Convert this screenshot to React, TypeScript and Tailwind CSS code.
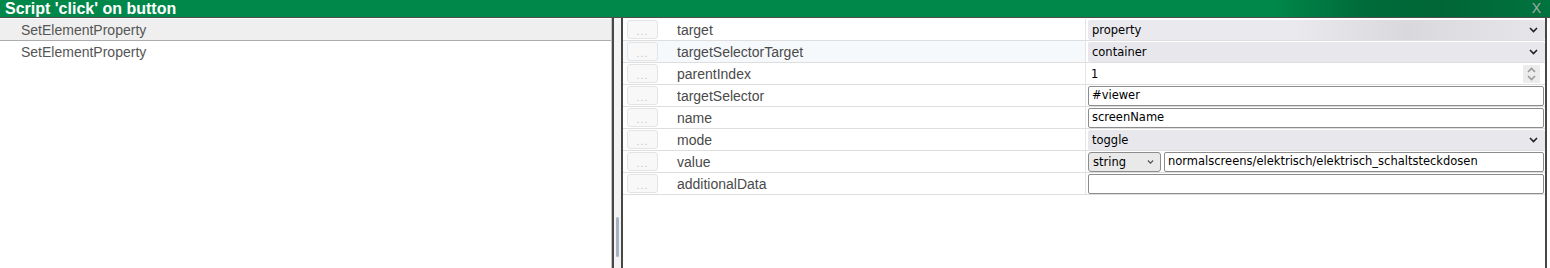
type Row = {
  label: string;
  kind: "select" | "number" | "text" | "typed";
  value: string;
  hover?: boolean;
  shade?: boolean;
};

const rows: Row[] = [
  { label: "target", kind: "select", value: "property", shade: true },
  { label: "targetSelectorTarget", kind: "select", value: "container", hover: true },
  { label: "parentIndex", kind: "number", value: "1" },
  { label: "targetSelector", kind: "text", value: "#viewer" },
  { label: "name", kind: "text", value: "screenName" },
  { label: "mode", kind: "select", value: "toggle" },
  { label: "value", kind: "typed", value: "normalscreens/elektrisch/elektrisch_schaltsteckdosen" },
  { label: "additionalData", kind: "text", value: "" },
];

const ctl = "font-['DejaVu_Sans',sans-serif] text-[11.5px] text-black";

function Chevron({ className }: { className?: string }) {
  return (
    <svg width="9" height="6" viewBox="0 0 9 6" className={className}>
      <path d="M1 1l3.5 3.5L8 1" fill="none" stroke="currentColor" strokeWidth="1.6" />
    </svg>
  );
}

function Control({ row }: { row: Row }) {
  if (row.kind === "select") {
    return (
      <div
        className={`${ctl} flex h-[20px] w-[457px] items-center justify-between rounded-[2px] pl-[4px] pr-[7px] ${
          row.shade
            ? "bg-[linear-gradient(90deg,#e9e9ee_0%,#e9e9ee_45%,#d9d9dd_70%,#e0e0e4_85%,#e6e6ea_100%)]"
            : "bg-[#e7e7ec]"
        }`}
      >
        <span className="pt-[2px]">{row.value}</span>
        <Chevron className="text-[#222]" />
      </div>
    );
  }
  if (row.kind === "number") {
    return (
      <div className={`${ctl} flex h-[20px] w-[456px] items-center justify-between pl-[3px] pr-[4px]`}>
        <span className="pt-[2px]">{row.value}</span>
        <div className="flex h-[18px] w-[17px] flex-col items-center justify-center gap-[2px] bg-[#ececec] text-[#9a9a9a]">
          <Chevron className="rotate-180" />
          <Chevron />
        </div>
      </div>
    );
  }
  if (row.kind === "typed") {
    return (
      <div className="flex h-[20px] w-[456px] gap-[3px]">
        <div
          className={`${ctl} flex w-[73px] items-center justify-between rounded-[3px] border border-[#8c8c8c] bg-[#e9e9e9] pl-[4px] pr-[5px] pt-[3px]`}
        >
          <span>string</span>
          <Chevron className="mb-[3px] scale-75 text-[#555]" />
        </div>
        <div
          className={`${ctl} flex flex-1 items-center rounded-[2px] border border-[#8c8c8c] bg-white pl-[3px] pt-[1px]`}
        >
          {row.value}
        </div>
      </div>
    );
  }
  return (
    <div
      className={`${ctl} flex h-[20px] w-[456px] items-center rounded-[2px] border border-[#8c8c8c] bg-white pl-[3px] pt-[1px]`}
    >
      {row.value}
    </div>
  );
}

export default function App() {
  return (
    <div className="flex h-[268px] w-[1550px] flex-col overflow-hidden bg-white font-['Liberation_Sans',Arial,sans-serif]">
      {/* Title bar */}
      <div className="flex h-[17px] items-center justify-between bg-[linear-gradient(90deg,#00884a_0%,#00884a_82%,#006b3a_88%,#006636_93%,#00733f_100%)] pl-[5px] pr-[9px]">
        <span className="text-[16px] font-bold leading-[17px] text-white">Script 'click' on button</span>
        <span className="text-[14px] leading-[17px] text-[#a3aca7]">X</span>
      </div>
      <div className="h-px bg-[#4e4e4e]" />

      {/* Body */}
      <div className="flex flex-1">
        {/* Actions list */}
        <div className="w-[612px] border-r border-[#c4c4c4] pt-px">
          <div className="flex h-[22px] items-center border-b border-[#acacac] bg-[#efefef] pl-[21px] pt-[1px] text-[14px] text-[#555]">
            SetElementProperty
          </div>
          <div className="flex h-[21px] items-center pl-[21px] pt-[1px] text-[14px] text-[#555]">SetElementProperty</div>
        </div>

        {/* Splitter */}
        <div className="flex w-[11px] border-x-2 border-[#4a4643] bg-[#f2f3f5] pl-[2px] pt-[199px]">
          <div className="h-[40px] w-[3px] rounded-full bg-[#a9b0c1]" />
        </div>

        {/* Properties */}
        <div className="w-[924px] border-r-2 border-[#4a4643] pt-px">
          {rows.map((row) => (
            <div
              key={row.label}
              className={`flex h-[22px] border-b border-[#dedede] ${row.hover ? "bg-[#f6f9fc]" : ""}`}
            >
              <div className="flex w-[462px] items-center">
                <div className="ml-[4px] flex h-[19px] w-[31px] items-end justify-center rounded-[3px] border border-[#e4e4e4] bg-[#f8f8f8] pb-[1px] text-[11px] leading-[11px] tracking-[1px] text-[#c4c4c4]">
                  ...
                </div>
                <span className="ml-[19px] pt-[1px] text-[14px] text-[#4a4a4a]">{row.label}</span>
              </div>
              <div className="flex flex-1 items-center border-l border-[#e4e4e4] bg-white pl-[2px]">
                <Control row={row} />
              </div>
            </div>
          ))}
        </div>
      </div>
    </div>
  );
}
